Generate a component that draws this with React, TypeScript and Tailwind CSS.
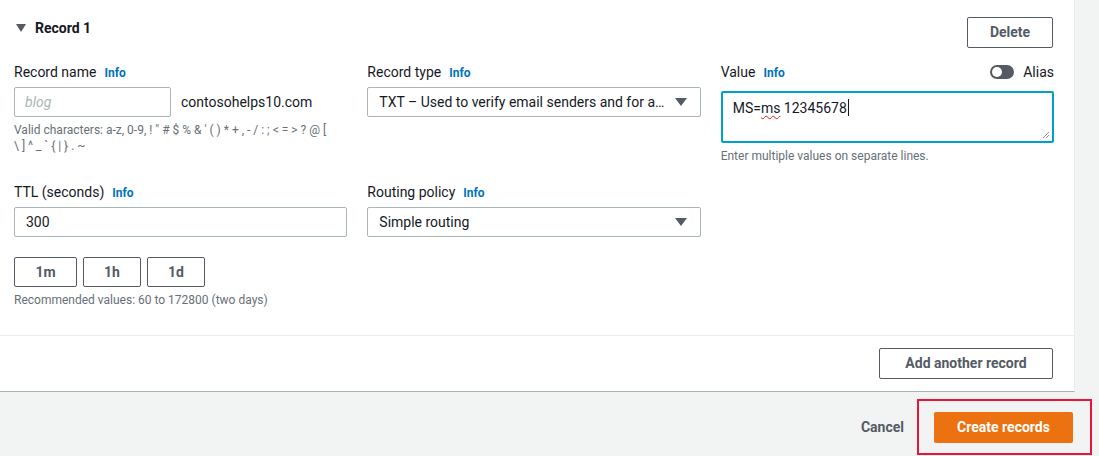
import React from 'react';

function Info() {
  return <span className="ml-2 text-[12px] font-bold text-[#0073bb]">Info</span>;
}

function Label({ text }: { text: string }) {
  return (
    <div className="flex h-[22px] items-baseline pt-[3px] text-[14px] leading-[16px] text-[#16191f]">
      {text}
      <Info />
    </div>
  );
}

function Caret() {
  return (
    <svg width="12" height="8" viewBox="0 0 12 8" className="shrink-0">
      <path d="M0 0h12L6 8z" fill="#545b64" />
    </svg>
  );
}

function SelectBox({ value }: { value: string }) {
  return (
    <div className="mt-1 flex h-[30px] items-center justify-between rounded-[2px] border border-[#aab7b8] bg-white pl-[11px] pr-[13px] text-[14px] text-[#16191f]">
      <span className="truncate pr-2">{value}</span>
      <Caret />
    </div>
  );
}

function SmallButton({ label, width }: { label: string; width: string }) {
  return (
    <button
      className={`flex h-[30px] ${width} items-center justify-center rounded-[2px] border border-[#545b64] bg-white text-[14px] font-bold text-[#545b64]`}
    >
      {label}
    </button>
  );
}

export default function App() {
  return (
    <div
      className="flex h-[456px] w-[1099px] flex-col bg-[#f2f3f3]"
      style={{ fontFamily: 'Roboto, "Open Sans", sans-serif' }}
    >
      {/* Record panel */}
      <div className="w-[1075px] border-r border-b border-r-[#eaeded] border-b-[#a9b4b5] bg-white">
        <div className="pl-[14px] pr-[20px] pt-[17px]">
          <div className="flex h-[31px] items-start justify-between">
            <div className="flex h-[22px] items-center gap-[9px] pl-[2px] text-[14px] font-bold text-[#16191f]">
              <svg width="10" height="8" viewBox="0 0 10 8">
                <path d="M0 0h10L5 8z" fill="#545b64" />
              </svg>
              Record 1
            </div>
            <button className="mr-[1px] flex h-[31px] w-[86px] items-center justify-center rounded-[2px] border border-[#545b64] text-[14px] font-bold text-[#545b64]">
              Delete
            </button>
          </div>

          <div className="mt-[13px] grid grid-cols-3 gap-x-5">
            <div>
              <Label text="Record name" />
              <div className="mt-1 flex items-center">
                <div className="flex h-[30px] w-[157px] items-center rounded-[2px] border border-[#aab7b8] px-[10px] text-[14px] italic text-[#aab7b8]">
                  blog
                </div>
                <span className="ml-[10px] text-[14px] text-[#16191f]">contosohelps10.com</span>
              </div>
              <p className="mt-[5px] text-[12px] leading-[16px] text-[#687078]">
                Valid characters: a-z, 0-9, ! " # $ % &amp; ' ( ) * + , - / : ; &lt; = &gt; ? @ [
                <br />
                \ ] ^ _ ` {'{'} | {'}'} . ~
              </p>
            </div>

            <div>
              <Label text="Record type" />
              <SelectBox value="TXT – Used to verify email senders and for application-specific values" />
            </div>

            <div>
              <div className="flex h-[22px] items-start justify-between">
                <div className="flex items-baseline pt-[3px] text-[14px] leading-[16px] text-[#16191f]">
                  Value
                  <Info />
                </div>
                <div className="flex items-center gap-[9px] pt-[2px] text-[14px] leading-[18px] text-[#16191f]">
                  <span className="flex h-[14px] w-[24px] items-center rounded-full bg-[#545b64] pl-[2px]">
                    <span className="h-[10px] w-[10px] rounded-full bg-white" />
                  </span>
                  Alias
                </div>
              </div>
              <div className="relative mt-2 h-[52px] rounded-[2px] border-2 border-[#00a1c9] px-[10px] pt-[3px] text-[14px] text-[#16191f]">
                <span>MS=</span>
                <span className="underline decoration-wavy decoration-[#e02020] decoration-1 underline-offset-2">ms</span>
                <span> 12345678</span>
                <span className="ml-[1px] inline-block h-[17px] w-px translate-y-[3px] bg-[#16191f]" />
                <svg width="8" height="8" viewBox="0 0 8 8" className="absolute bottom-[2px] right-[2px]">
                  <path d="M7 1L1 7M7 4L4 7" stroke="#879596" strokeWidth="1" />
                </svg>
              </div>
              <p className="mt-[5px] text-[12px] leading-[16px] text-[#687078]">
                Enter multiple values on separate lines.
              </p>
            </div>
          </div>

          <div className="mt-[17px] grid grid-cols-3 gap-x-5">
            <div>
              <Label text="TTL (seconds)" />
              <div className="mt-1 flex h-[30px] items-center rounded-[2px] border border-[#aab7b8] px-[11px] text-[14px] text-[#16191f]">
                300
              </div>
              <div className="mt-5 flex gap-[6px]">
                <SmallButton label="1m" width="w-[63px]" />
                <SmallButton label="1h" width="w-[58px]" />
                <SmallButton label="1d" width="w-[58px]" />
              </div>
              <p className="mt-[5px] text-[12px] leading-[16px] text-[#687078]">
                Recommended values: 60 to 172800 (two days)
              </p>
            </div>
            <div>
              <Label text="Routing policy" />
              <SelectBox value="Simple routing" />
            </div>
            <div />
          </div>
        </div>

        <div className="mt-[27px] border-t border-[#eaeded] pb-[12px] pr-[20px] pt-[12px]">
          <div className="flex justify-end">
            <button className="mr-[1px] flex h-[31px] w-[174px] items-center justify-center rounded-[2px] border border-[#545b64] text-[14px] font-bold text-[#545b64]">
              Add another record
            </button>
          </div>
        </div>
      </div>

      {/* Footer actions */}
      <div className="flex items-center justify-end pr-[7px] pt-[7px]">
        <button className="mr-[13px] text-[14px] font-bold text-[#545b64]">Cancel</button>
        <div className="flex h-[56px] w-[175px] items-center justify-center border-2 border-[#e8173a]">
          <button className="ml-[-2px] flex h-[31px] w-[139px] items-center justify-center rounded-[2px] bg-[#ec7211] text-[14px] font-bold text-white">
            Create records
          </button>
        </div>
      </div>
    </div>
  );
}
